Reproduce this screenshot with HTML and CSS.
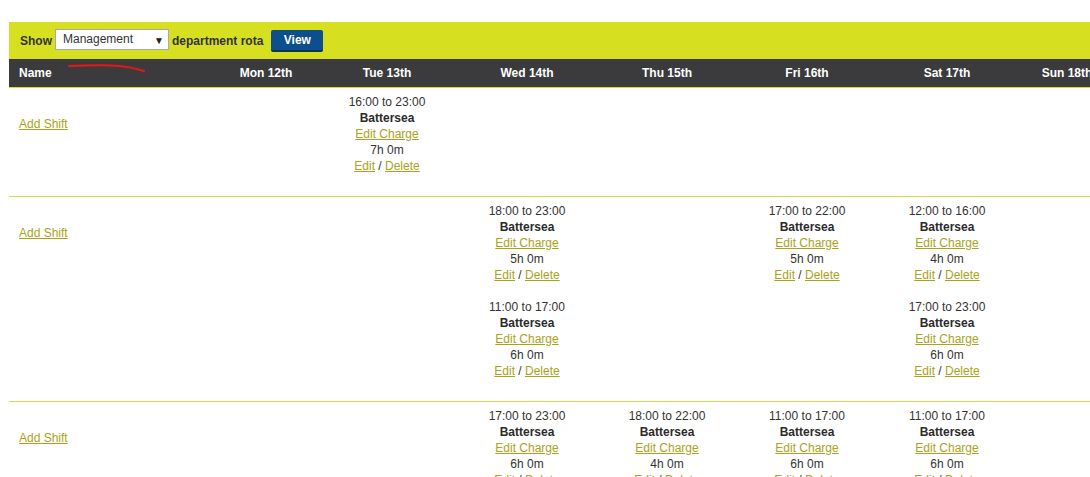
FILE: index.html
```html
<!DOCTYPE html>
<html lang="en">

<head>
    <meta charset="UTF-8">
    <title>Department rota</title>
    <link rel="stylesheet" href="styles.css">
</head>

<body>

    <div class="page">
        <!-- department picker -->
        <form class="toolbar">
            <strong>Show</strong>
            <span class="select-wrap">
                <select class="dept">
                    <option>Management</option>
                    <option>Bar</option>
                    <option>Kitchen</option>
                </select>
            </span>
            <strong>department rota</strong>
            <button type="button" class="btn-view">View</button>
        </form>

        <table class="rota">
            <colgroup>
                <col class="col-name">
                <col class="col-mon">
                <col class="col-day">
                <col class="col-day">
                <col class="col-day">
                <col class="col-day">
                <col class="col-day">
                <col class="col-sun">
            </colgroup>
            <thead>
                <tr>
                    <th class="name">Name</th>
                    <th>Mon 12th</th>
                    <th>Tue 13th</th>
                    <th>Wed 14th</th>
                    <th>Thu 15th</th>
                    <th>Fri 16th</th>
                    <th>Sat 17th</th>
                    <th>Sun 18th</th>
                </tr>
            </thead>
            <tbody>
                <tr>
                    <td class="name"><a href="#">Add Shift</a></td>
                    <td></td>
                    <td>
                        <div class="shift">
                            16:00 to 23:00<br>
                            <b>Battersea</b><br>
                            <a href="#">Edit Charge</a><br>
                            7h 0m<br>
                            <a href="#">Edit</a> / <a href="#">Delete</a>
                        </div>
                    </td>
                    <td></td>
                    <td></td>
                    <td></td>
                    <td></td>
                    <td></td>
                </tr>
                <tr>
                    <td class="name"><a href="#">Add Shift</a></td>
                    <td></td>
                    <td></td>
                    <td>
                        <div class="shift">
                            18:00 to 23:00<br>
                            <b>Battersea</b><br>
                            <a href="#">Edit Charge</a><br>
                            5h 0m<br>
                            <a href="#">Edit</a> / <a href="#">Delete</a>
                        </div>
                        <div class="shift">
                            11:00 to 17:00<br>
                            <b>Battersea</b><br>
                            <a href="#">Edit Charge</a><br>
                            6h 0m<br>
                            <a href="#">Edit</a> / <a href="#">Delete</a>
                        </div>
                    </td>
                    <td></td>
                    <td>
                        <div class="shift">
                            17:00 to 22:00<br>
                            <b>Battersea</b><br>
                            <a href="#">Edit Charge</a><br>
                            5h 0m<br>
                            <a href="#">Edit</a> / <a href="#">Delete</a>
                        </div>
                    </td>
                    <td>
                        <div class="shift">
                            12:00 to 16:00<br>
                            <b>Battersea</b><br>
                            <a href="#">Edit Charge</a><br>
                            4h 0m<br>
                            <a href="#">Edit</a> / <a href="#">Delete</a>
                        </div>
                        <div class="shift">
                            17:00 to 23:00<br>
                            <b>Battersea</b><br>
                            <a href="#">Edit Charge</a><br>
                            6h 0m<br>
                            <a href="#">Edit</a> / <a href="#">Delete</a>
                        </div>
                    </td>
                    <td></td>
                </tr>
                <tr>
                    <td class="name"><a href="#">Add Shift</a></td>
                    <td></td>
                    <td></td>
                    <td>
                        <div class="shift">
                            17:00 to 23:00<br>
                            <b>Battersea</b><br>
                            <a href="#">Edit Charge</a><br>
                            6h 0m<br>
                            <a href="#">Edit</a> / <a href="#">Delete</a>
                        </div>
                    </td>
                    <td>
                        <div class="shift">
                            18:00 to 22:00<br>
                            <b>Battersea</b><br>
                            <a href="#">Edit Charge</a><br>
                            4h 0m<br>
                            <a href="#">Edit</a> / <a href="#">Delete</a>
                        </div>
                    </td>
                    <td>
                        <div class="shift">
                            11:00 to 17:00<br>
                            <b>Battersea</b><br>
                            <a href="#">Edit Charge</a><br>
                            6h 0m<br>
                            <a href="#">Edit</a> / <a href="#">Delete</a>
                        </div>
                    </td>
                    <td>
                        <div class="shift">
                            11:00 to 17:00<br>
                            <b>Battersea</b><br>
                            <a href="#">Edit Charge</a><br>
                            6h 0m<br>
                            <a href="#">Edit</a> / <a href="#">Delete</a>
                        </div>
                    </td>
                    <td></td>
                </tr>
            </tbody>
        </table>

        <!-- red pen mark on the screenshot -->
        <svg class="scribble" width="80" height="10" viewBox="0 0 80 10">
            <path d="M1 2 C 20 1, 40 1, 52 2 C 62 3, 70 5, 76 7" fill="none" stroke="#e8161b" stroke-width="2"
                stroke-linecap="round" />
        </svg>
    </div>

</body>

</html>
```

FILE: styles.css
```css
body {
    font-family: "Liberation Sans", Arial, sans-serif;
    font-size: 12px;
    color: #333333;
    margin: 0;
    overflow: hidden;
    background-color: #ffffff;
}

.page {
    position: relative;
    padding: 22px 0 0 9px;
    width: 1200px;
}

.toolbar {
    display: flex;
    align-items: center;
    gap: 3px;
    height: 37px;
    padding-left: 11px;
    background-color: #d6e021;
    color: #333333;
}

.select-wrap {
    position: relative;
    display: inline-block;
}

.select-wrap::after {
    content: "\25BC";
    position: absolute;
    right: 5px;
    top: 3px;
    font-size: 10px;
    color: #222222;
    pointer-events: none;
}

.dept {
    appearance: none;
    -webkit-appearance: none;
    width: 114px;
    height: 21px;
    margin-top: -3px;
    padding: 0 0 0 7px;
    border: 1px solid #a9a9a9;
    border-radius: 0;
    background-color: #ffffff;
    font-family: "Liberation Sans", Arial, sans-serif;
    font-size: 12px;
    color: #333333;
}

.btn-view {
    margin-left: 5px;
    margin-top: 1px;
    width: 52px;
    height: 22px;
    padding: 0;
    border: none;
    border-bottom: 2px solid #07335c;
    border-radius: 2px;
    background-color: #0d4f8c;
    color: #ffffff;
    font-family: "Liberation Sans", Arial, sans-serif;
    font-size: 12px;
    font-weight: bold;
}

.rota {
    border-collapse: collapse;
    table-layout: fixed;
    width: 1108px;
}

.col-name {
    width: 206px;
}

.col-mon {
    width: 102px;
}

.col-day {
    width: 140px;
}

.col-sun {
    width: 100px;
}

.rota th {
    height: 28px;
    padding: 0;
    background-color: #3b3b3d;
    border-bottom: 1px solid #d6e021;
    color: #ffffff;
    font-weight: bold;
    text-align: center;
    white-space: nowrap;
}

.rota th.name {
    text-align: left;
    padding-left: 10px;
}

.rota td {
    padding: 6px 0 6px;
    border-bottom: 1px solid #d4dc45;
    vertical-align: top;
    text-align: center;
    line-height: 16px;
}

.rota td.name {
    text-align: left;
    padding: 28px 0 0 10px;
}

.shift {
    margin-bottom: 16px;
}

.shift b {
    color: #2b2b2b;
}

.rota a {
    color: #a8a31a;
    text-decoration: underline;
}

.scribble {
    position: absolute;
    left: 68px;
    top: 64px;
}
```
